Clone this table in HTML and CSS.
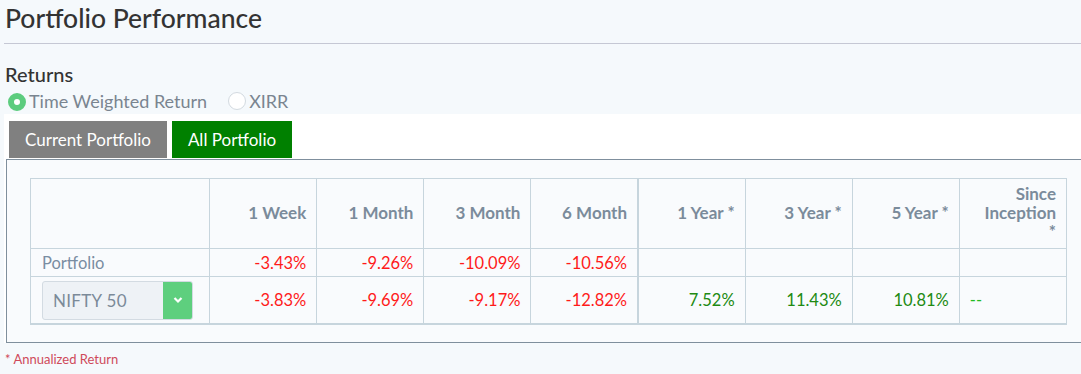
FILE: index.html
```html
<!DOCTYPE html>
<html>
<head>
<meta charset="utf-8">
<link rel="stylesheet" href="styles.css">
</head>
<body>
<div class="page">
  <div class="title-bar"><h1 class="title">Portfolio Performance</h1></div>
  <h2 class="returns">Returns</h2>
  <div class="radios">
    <label class="radio"><span class="dot on"></span>Time Weighted Return</label>
    <label class="radio"><span class="dot"></span>XIRR</label>
  </div>
  <div class="content">
    <div class="tabs">
      <button class="tab grey">Current Portfolio</button>
      <button class="tab green">All Portfolio</button>
    </div>
    <div class="panel">
      <table class="perf">
        <colgroup>
          <col class="c0"><col class="c"><col class="c"><col class="c"><col class="c"><col class="c"><col class="c"><col class="c"><col class="c">
        </colgroup>
        <thead>
          <tr>
            <th></th><th>1 Week</th><th>1 Month</th><th>3 Month</th><th class="sep">6 Month</th><th>1 Year *</th><th>3 Year *</th><th>5 Year *</th><th>Since Inception *</th>
          </tr>
        </thead>
        <tbody>
          <tr class="r1">
            <td class="label">Portfolio</td><td class="neg">-3.43%</td><td class="neg">-9.26%</td><td class="neg">-10.09%</td><td class="neg sep">-10.56%</td><td></td><td></td><td></td><td></td>
          </tr>
          <tr class="r2">
            <td class="label"><div class="select"><span class="sel-text">NIFTY 50</span><span class="sel-btn"><svg width="12" height="8" viewBox="0 0 12 8"><path d="M2.5 2 L6 5.5 L9.5 2" fill="none" stroke="#fff" stroke-width="2.2"/></svg></span></div></td>
            <td class="neg">-3.83%</td><td class="neg">-9.69%</td><td class="neg">-9.17%</td><td class="neg sep">-12.82%</td><td class="pos">7.52%</td><td class="pos">11.43%</td><td class="pos">10.81%</td><td class="na">--</td>
          </tr>
        </tbody>
      </table>
    </div>
  </div>
  <div class="note">* Annualized Return</div>
</div>
</body>
</html>
```
FILE: styles.css
```css
html, body {
  margin: 0;
  padding: 0;
  background: #f5f9fc;
  overflow: hidden;
}
body {
  font-family: Lato, "Liberation Sans", sans-serif;
  color: #333;
}
.page {
  width: 1081px;
}
.title-bar {
  margin-left: 4px;
  height: 43px;
  border-bottom: 1px solid #c5c8d4;
}
.title {
  margin: 0;
  padding-left: 1px;
  font-size: 26.5px;
  font-weight: 500;
  line-height: 37px;
  color: #333;
}
.returns {
  margin: 18px 0 0 5px;
  font-size: 20px;
  font-weight: 500;
  line-height: 24px;
  color: #333;
}
.radios {
  display: flex;
  gap: 21px;
  padding-left: 8px;
  height: 24px;
  align-items: center;
  margin-top: 3px;
}
.radio {
  display: flex;
  align-items: center;
  font-size: 18px;
  color: #7a8590;
}
.dot {
  width: 18px;
  height: 18px;
  border-radius: 50%;
  border: 1px solid #d3dae0;
  background: #fff;
  margin-right: 3px;
  box-sizing: border-box;
}
.dot.on {
  width: 18px;
  height: 18px;
  border: 6px solid #5ccc7e;
  background: #fff;
  margin-top: 1px;
}
.content {
  margin-top: 1px;
  margin-left: 4px;
  background: #fff;
  padding-top: 7px;
  width: 1090px;
}
.tabs {
  display: flex;
  gap: 5px;
  padding-left: 5px;
}
.tab {
  border: 0;
  height: 37px;
  padding: 0;
  font-family: Lato, "Liberation Sans", sans-serif;
  font-size: 17px;
  color: #fff;
}
.tab.grey {
  background: #808080;
  width: 158px;
}
.tab.green {
  background: #008000;
  width: 120px;
}
.panel {
  margin-top: 1px;
  margin-left: 2px;
  border: 1px solid #7f8f9d;
  background: #f9fbfd;
  padding: 18px 0 17px 23px;
}
.perf {
  border-collapse: collapse;
  table-layout: fixed;
  width: 1037px;
  background: #f9fbfd;
}
.perf col.c0 { width: 179px; }
.perf col.c { width: 107px; }
.perf th, .perf td {
  border: 1px solid #c7d5dd;
  text-align: right;
  padding: 0 10px;
  font-size: 16.5px;
}
.perf th {
  height: 66px;
  padding-bottom: 3px;
  font-size: 17px;
  font-weight: 700;
  color: #7b8b9b;
  line-height: 19px;
}
.perf th:last-child {
  padding-left: 20px;
}
.perf .sep {
  border-right: 2px solid #c7d5dd;
}
.perf tbody tr:last-child td {
  border-bottom: 2px solid #c7d5dd;
}
.r1 td { height: 27px; }
.r2 td { height: 46px; }
.perf td.label {
  text-align: left;
  color: #7a8da2;
  padding-left: 11px;
}
.perf td.neg { color: #ff1a1a; }
.perf td.pos { color: #218a12; }
.perf td.na {
  color: #22bb22;
  text-align: left;
}
.select {
  display: flex;
  width: 151px;
  height: 39px;
  border: 1px solid #d3dbe2;
  border-radius: 3px;
  background: #eef2f6;
  box-sizing: border-box;
  overflow: hidden;
}
.sel-text {
  flex: 1;
  display: flex;
  align-items: center;
  padding-left: 10px;
  color: #7b8a99;
  font-size: 17px;
  letter-spacing: 0.3px;
}
.sel-btn {
  width: 29px;
  background: #5ecf7e;
  display: flex;
  align-items: center;
  justify-content: center;
}
.note {
  margin: 8px 0 0 5px;
  font-size: 13px;
  color: #cf4a5a;
}
```
